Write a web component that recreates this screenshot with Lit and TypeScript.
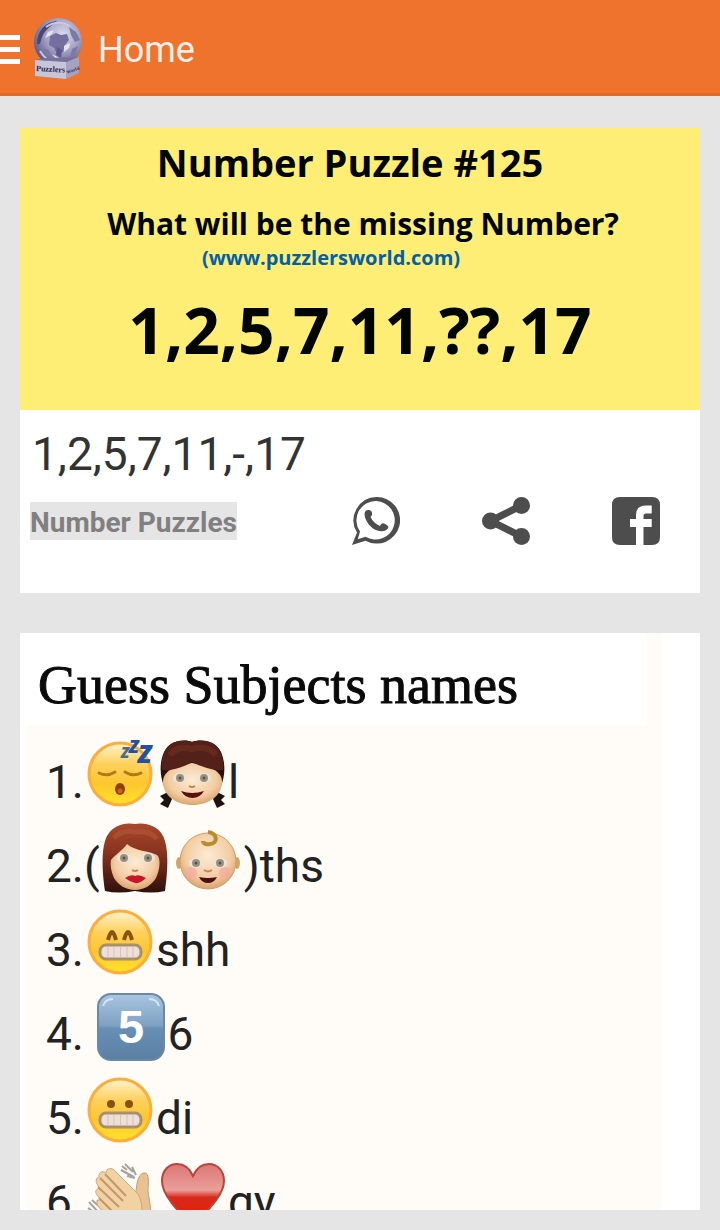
import { LitElement, html, svg, css } from "lit";
import { customElement, property } from "lit/decorators.js";

type EmojiName =
  | "sleepy" | "girl" | "woman" | "baby" | "grin" | "five" | "grimace" | "clap" | "heart";

type Piece = string | { emoji: EmojiName };

const CLUES: Piece[][] = [
  ["1.", { emoji: "sleepy" }, { emoji: "girl" }, "l"],
  ["2.(", { emoji: "woman" }, { emoji: "baby" }, ")ths"],
  ["3.", { emoji: "grin" }, "shh"],
  ["4. ", { emoji: "five" }, "6"],
  ["5.", { emoji: "grimace" }, "di"],
  ["6.", { emoji: "clap" }, { emoji: "heart" }, "gy"],
];

const yellowHead = svg`
  <defs>
    <linearGradient id="yl" x1="0" y1="0" x2="0" y2="1">
      <stop offset="0" stop-color="#fff3cf"/>
      <stop offset=".35" stop-color="#fdd05a"/>
      <stop offset=".65" stop-color="#fdc62f"/>
      <stop offset="1" stop-color="#ffe32a"/>
    </linearGradient>
  </defs>
  <circle cx="36" cy="36" r="31" fill="url(#yl)" stroke="#fbae3c" stroke-width="3"/>`;

const teeth = svg`
  <rect x="16" y="39" width="41" height="14" rx="6" fill="#eedfd8" stroke="#a8906c" stroke-width="3"/>
  <path d="M24 41V51M30 41V51M36.500 41V51M43 41V51M49 41V51" stroke="#d6c3ba" stroke-width="1" fill="none"/>`;

const skin = svg`
  <defs>
    <radialGradient id="sk" cx=".5" cy=".4" r=".62">
      <stop offset="0" stop-color="#fdebd3"/>
      <stop offset=".65" stop-color="#f3cda4"/>
      <stop offset="1" stop-color="#d99f68"/>
    </radialGradient>
  </defs>`;

const eyes = (y: number) => svg`
  <ellipse cx="24" cy=${y} rx="7" ry="5" fill="#e9e4dc"/>
  <ellipse cx="48" cy=${y} rx="7" ry="5" fill="#e9e4dc"/>
  <circle cx="24" cy=${y} r="4" fill="#9a917c"/>
  <circle cx="48" cy=${y} r="4" fill="#9a917c"/>
  <circle cx="24" cy=${y} r="1.500" fill="#5b5446"/>
  <circle cx="48" cy=${y} r="1.500" fill="#5b5446"/>`;

const ART = {
  sleepy: svg`${yellowHead}
    <path d="M15 35q8 4 16-1M41 34q8 5 16 1" fill="none" stroke="#b07a1c" stroke-width="3" stroke-linecap="round"/>
    <ellipse cx="36" cy="51" rx="5" ry="6" fill="#8f3f0e"/>
    <ellipse cx="36" cy="53" rx="2.500" ry="2.500" fill="#d0601c"/>
    <g class="zzz" fill="#2450a4">
      <text x="37" y="20" font-size="15" fill="#4c6a8a">Z</text>
      <text x="45" y="15" font-size="18">Z</text>
      <text x="54" y="25" font-size="25">Z</text>
    </g>`,
  girl: svg`${skin}
    <path d="M12 54l-8 4 4 4-4 4 8 4 4-9zM61 54l8 4-4 4 4 4-8 4-4-9z" fill="#1d1210"/>
    <path d="M36 4C44 1 59 2 65 14C70 26 69 38 65 48H8C4 38 3 26 8 14C14 2 29 1 36 4Z" fill="#2a100c"/>
    <path d="M7 44C7 32 20 28 36 25C52 28 66 32 66 44C66 58 52 67 36.500 67S7 58 7 44Z" fill="url(#sk)"/>
    <path d="M36 4C44 1 59 2 64 13C67 20 68 25 67 32C58 33 46 29 36 24C28 29 16 33 6 32C5 25 6 20 9 13C14 2 29 1 36 4Z" fill="#54201a"/>
    <path d="M14 17Q22 7 36 11Q52 7 60 17" fill="none" stroke="#6d2e20" stroke-width="6" opacity=".7"/>
    ${eyes(40)}
    <path d="M33 48q3 2 6 0" fill="none" stroke="#c08850" stroke-width="2"/>
    <path d="M25 53Q36 57 48 53Q44 60 36.500 60T25 53Z" fill="#5b1010"/>`,
  woman: svg`${skin}
    <defs>
      <linearGradient id="rh" x1="0" y1="0" x2="0" y2="1">
        <stop offset="0" stop-color="#a8482c"/><stop offset=".4" stop-color="#8a3420"/>
        <stop offset="1" stop-color="#30100c"/>
      </linearGradient>
    </defs>
    <path d="M35 2C44 0 58 3 63 14C69 26 68 48 65 69Q52 72 35 69Q18 72 5 69C2 48 1 26 7 14C13 3 25 0 35 2Z" fill="url(#rh)"/>
    <path d="M11 38C16 32 23 28 27 22C34 29 50 29 57 33C61 36 60 48 56 56C52 63 44 68 35 68S18 63 14 56C11 49 10 43 11 38Z" fill="url(#sk)"/>
    <path d="M14 16Q21 8 34 10Q50 8 57 17" fill="none" stroke="#b95a3a" stroke-width="5" opacity=".5"/>
    ${eyes(36)}
    <path d="M32 48q3 2 6 0" fill="none" stroke="#c08850" stroke-width="2"/>
    <path d="M25 56Q31 52 35 54Q39 52 46 56Q40 62 35 61T25 56Z" fill="#c9142c"/>`,
  baby: svg`${skin}
    <ellipse cx="7" cy="41" rx="3" ry="6" fill="#cfa868"/>
    <ellipse cx="65" cy="41" rx="3" ry="6" fill="#cfa868"/>
    <circle cx="36" cy="39" r="28" fill="url(#sk)" stroke="#cf9b68" stroke-width="1"/>
    <path d="M36 10C46 11 46 22 38 22C34 23 31 21 31 19" fill="none" stroke="#b58e2c" stroke-width="4"/>
    <circle cx="19" cy="51" r="6" fill="#f7a9a0" opacity=".7"/>
    <circle cx="53" cy="51" r="6" fill="#f7a9a0" opacity=".7"/>
    ${eyes(41)}
    <path d="M32 48q4 3 8 0" fill="none" stroke="#c08850" stroke-width="2"/>
    <path d="M27 55Q36 57 45 55Q42 61 36 61T27 55Z" fill="#4a1010"/>`,
  grin: svg`${yellowHead}
    <path d="M24 34Q26 26 28 26T32 34M40 34Q42 26 44 26T48 34" fill="none" stroke="#8a5212" stroke-width="4"/>
    ${teeth}`,
  grimace: svg`${yellowHead}
    <ellipse cx="27" cy="30" rx="4" ry="4" fill="#8a5212"/>
    <ellipse cx="45" cy="30" rx="4" ry="4" fill="#8a5212"/>
    ${teeth}`,
  five: svg`
    <defs>
      <linearGradient id="kc" x1="0" y1="0" x2="0" y2="1">
        <stop offset="0" stop-color="#a9c6e2"/><stop offset=".48" stop-color="#7ea0c2"/>
        <stop offset=".52" stop-color="#6790b4"/><stop offset="1" stop-color="#5b7fa3"/>
      </linearGradient>
    </defs>
    <rect x="3" y="4" width="66" height="66" rx="13" fill="url(#kc)" stroke="#6a88a8" stroke-width="2"/>
    <path d="M8 16Q10 9 18 9M54 9Q62 9 64 16" fill="none" stroke="#d4e6f8" stroke-width="2"/>
    <text class="key" x="36" y="53" font-size="47" text-anchor="middle" fill="#fff">5</text>`,
  clap: svg`
    <g fill="none" stroke="#a3a3a0" stroke-width="2">
      <path d="M38 8l5 4M37 12l13 7M41 6l8 8M43 18l8 2M48 9l4 8"/>
      <path d="M5 44l11 12M8 42l12 11M4 50l9 6M13 42l5 6"/>
    </g>
    <path d="M52 33C53 25 54 16 60 15C66 14 64 26 64 33C65 42 68 52 66 62L50 72H36Z" fill="#e8c293" stroke="#c79c6c"/>
    <path d="M15 19C14 15 18 12 22 15C22 10 28 9 31 13L52 34C58 39 60 54 55 63C51 70 42 75 34 69L15 49C11 45 13 41 17 42L13 37C10 33 13 30 16 31L13 26C11 22 13 19 15 19Z" fill="#f1d2a5" stroke="#cfa678"/>
    <path d="M21 16L42 38M16 20L39 43M14 29L35 49M15 40L31 56" stroke="#c39767" stroke-width="2" fill="none"/>`,
  heart: svg`
    <defs>
      <linearGradient id="hr" x1="0" y1="0" x2="0" y2="1">
        <stop offset="0" stop-color="#dc7676"/><stop offset=".42" stop-color="#eb9f9a"/>
        <stop offset=".54" stop-color="#d8291a"/><stop offset="1" stop-color="#ee1c00"/>
      </linearGradient>
    </defs>
    <path d="M37 68C24 55 6 38 6 23C6 11 14 6 21 6C29 6 34 11 37 18C40 11 45 6 53 6C61 6 68 12 68 23C68 38 49 55 37 68Z" fill="url(#hr)" stroke="#b9443c" stroke-width="2"/>`,
};

@customElement("clue-emoji")
class ClueEmoji extends LitElement {
  static styles = css`
    :host { display: inline-block; width: 72px; height: 72px; margin-top: -8px; vertical-align: -12px; }
    .art { display: block; width: 100%; height: 100%; overflow: visible; }
    .zzz { font-family: "Open Sans", sans-serif; font-weight: 800; font-style: italic; }
    .key { font-family: "Liberation Sans", sans-serif; font-weight: 700; }
  `;
  @property() name: EmojiName = "grin";
  render() {
    return html`<svg class="art" viewBox="0 0 72 72" aria-hidden="true">${ART[this.name]}</svg>`;
  }
}

@customElement("app-bar")
class AppBar extends LitElement {
  static styles = css`
    :host { display: block; }
    .bar {
      display: flex; align-items: center; box-sizing: border-box; height: 96px;
      background: #ef732d; border-bottom: 3px solid #df6925; padding-top: 5px;
    }
    .menu {
      display: flex; flex-direction: column; gap: 7px; width: 20px; padding: 0;
      border: 0; background: none; cursor: pointer;
    }
    .line { height: 5px; width: 100%; background: #fff; }
    .logo { width: 64px; height: 64px; margin: 0 8px 0 6px; }
    .caption { font-family: "Liberation Serif", serif; font-weight: 700; }
    .title { margin: 0; padding-top: 2px; font-weight: 400; font-size: 36px; line-height: 48px; color: #f7efea; }
  `;
  render() {
    return html`
      <header class="bar">
        <button class="menu" aria-label="Open menu">
          <span class="line"></span><span class="line"></span><span class="line"></span>
        </button>
        <svg class="logo" viewBox="0 0 64 64" aria-hidden="true">
          <defs>
            <radialGradient id="gl" cx=".6" cy=".35" r=".7">
              <stop offset="0" stop-color="#dcdced"/><stop offset=".5" stop-color="#a3a2c4"/>
              <stop offset="1" stop-color="#55507f"/>
            </radialGradient>
          </defs>
          <circle cx="32" cy="25" r="24" fill="url(#gl)"/>
          <path d="M11 27C11 14 19 5 31 4C27 8 19 12 16 20C14 25 15 28 11 27Z" fill="#49466f"/>
          <path d="M20 10Q32 2 44 9M14 34Q20 44 30 47" fill="none" stroke="#c9c9e0" stroke-width="2"/>
          <path d="M24 19l6-3 5 2 6-1 2 6-4 5-2 7-6 2-3-6-5-3z" fill="#7370a0"/>
          <path d="M43 10l7 5 4 8-5 2-4-7zM46 32l6-3-3 9-5 3zM17 31l6 2 2 7-5-2z" fill="#7c7aa5"/>
          <path d="M31 30l5 3-1 8-5-3z" fill="#5d598b"/>
          <path d="M22 15l6-2-3 5-6 3zM38 29l6-3-1 5-5 4zM26 37l4 5 7 1" fill="#e4e4f1"/>
          <path d="M17 41q14 9 29 0l1 4H16z" fill="#4a456f"/>
          <path d="M9 43L20 41L53 40L40 45Z" fill="#77729c"/>
          <path d="M9 43L40 45V62L9 59Z" fill="#c7c6d8"/>
          <path d="M40 45L53 40V56L40 62Z" fill="#a5a3c1"/>
          <text class="caption" x="10" y="54" font-size="8" fill="#282450" transform="rotate(3 10 54)">Puzzlers</text>
          <text class="caption" x="41" y="57" font-size="5" fill="#35305a" transform="rotate(-20 41 57)">World</text>
        </svg>
        <h1 class="title">Home</h1>
      </header>`;
  }
}

@customElement("number-card")
class NumberCard extends LitElement {
  static styles = css`
    :host { display: block; background: #fff; }
    p { margin: 0; }
    .banner {
      display: flex; flex-direction: column; align-items: center; box-sizing: border-box;
      min-height: 282px; padding-top: 6px; background: #ffee75; color: #000500;
      font-family: "Open Sans", "Noto Sans", sans-serif; font-weight: 700; white-space: nowrap;
    }
    .name { font-size: 38px; line-height: 56px; padding: 0 20px 12px 0; }
    .question { font-size: 30px; line-height: 44px; padding-left: 6px; }
    .site { font-size: 20px; line-height: 24px; padding: 0 58px 12px 0; }
    .site a { color: #0060a8; text-decoration: none; }
    .series { font-size: 64px; line-height: 96px; }
    .body { padding: 14px 10px 48px; }
    .title { margin: 0; padding-left: 2px; font-size: 46px; line-height: 60px; font-weight: 400; color: #333; }
    .row { display: flex; align-items: center; justify-content: space-between; margin-top: 13px; }
    .tag {
      font-size: 28px; line-height: 34px; padding-top: 4px; font-weight: 700; color: #808080;
      background: #e5e5e5; text-decoration: none;
    }
    .actions { display: flex; gap: 82px; padding-right: 30px; }
    .action { width: 48px; height: 48px; padding: 0; border: 0; background: none; cursor: pointer; }
    .icon { display: block; width: 48px; height: 48px; fill: #4d4d4d; }
  `;
  render() {
    return html`
      <article>
        <div class="banner">
          <p class="name">Number Puzzle #125</p>
          <p class="question">What will be the missing Number?</p>
          <p class="site"><a href="#site">(www.puzzlersworld.com)</a></p>
          <p class="series">1,2,5,7,11,??,17</p>
        </div>
        <div class="body">
          <h2 class="title">1,2,5,7,11,-,17</h2>
          <div class="row">
            <a class="tag" href="#number-puzzles">Number Puzzles</a>
            <div class="actions">
              <button class="action" aria-label="Share on WhatsApp">
                <svg class="icon" viewBox="0 0 48 48">
                  <path fill-rule="evenodd" d="M24.500 0A23.300 23.300 0 1 1 13.500 43.700L0 48L5 35.500A23.300 23.300 0 0 1 24.500 0ZM24.500 4A19.300 19.300 0 0 0 8 34.500L5.800 42.300L13.500 39.800A19.300 19.300 0 1 0 24.500 4Z"/>
                  <path d="M13.500 14C15 12.500 18.500 12.500 19.500 14.500C20.500 17 20.500 18.500 18.500 20C20.500 24 24 27.500 28 29C29 26.500 31 25.500 33 27C36 28.500 37.500 30 35.500 32C32 35.500 26 34.500 21 31.500C15 27 10.500 18 13.500 14Z"/>
                </svg>
              </button>
              <button class="action" aria-label="Share">
                <svg class="icon" viewBox="0 0 48 48">
                  <path d="M8.500 24L39.500 8.500M8.500 24L39.500 39.500" stroke="#4d4d4d" stroke-width="7"/>
                  <circle cx="8.500" cy="24" r="8.500"/><circle cx="39.500" cy="8.500" r="8.500"/>
                  <circle cx="39.500" cy="39.500" r="8.500"/>
                </svg>
              </button>
              <button class="action" aria-label="Share on Facebook">
                <svg class="icon" viewBox="0 0 48 48">
                  <path d="M8 0H40Q48 0 48 8V40Q48 48 40 48H31.500V30H39.700V22H31.500V19Q31.500 16.500 34 16.500H39.700V8.500H34Q24 8.500 24 18V22H18V30H24V48H8Q0 48 0 40V8Q0 0 8 0Z"/>
                </svg>
              </button>
            </div>
          </div>
        </div>
      </article>`;
  }
}

@customElement("subjects-card")
class SubjectsCard extends LitElement {
  static styles = css`
    :host { display: block; background: #fff; padding-right: 38px; }
    .sheet { background: #fffbf7; border-left: 6px solid #fff; }
    .heading {
      margin: 0 15px 0 0; padding: 22px 0 10px 12px; background: #fff; color: #0a0a0a;
      font-family: "Liberation Serif", serif; font-size: 54px; line-height: 60px;
      font-weight: 400; white-space: nowrap; -webkit-text-stroke: 1px #0a0a0a;
    }
    .clues { margin: 0; padding: 15px 0 15px 20px; list-style: none; }
    .clue { font-size: 46px; line-height: 84px; white-space: pre; color: #222; }
  `;
  render() {
    return html`
      <article class="sheet">
        <h2 class="heading">Guess Subjects names</h2>
        <ul class="clues">
          ${CLUES.map(
            (clue) => html`<li class="clue">${clue.map((piece) =>
              typeof piece === "string" ? piece : html`<clue-emoji name=${piece.emoji}></clue-emoji>`
            )}</li>`
          )}
        </ul>
      </article>`;
  }
}

@customElement("app-root")
class AppRoot extends LitElement {
  static styles = css`
    :host {
      display: flex; flex-direction: column; box-sizing: border-box; height: 100vh;
      padding-bottom: 20px; background: #e5e5e5; font-family: Roboto, sans-serif;
    }
    .feed {
      flex: 1; min-height: 0; overflow: hidden; box-sizing: border-box;
      padding: 32px 20px 0; display: flex; flex-direction: column; gap: 40px;
    }
    .feed > * { flex: none; }
  `;
  render() {
    return html`
      <app-bar></app-bar>
      <main class="feed">
        <number-card></number-card>
        <subjects-card></subjects-card>
      </main>`;
  }
}
